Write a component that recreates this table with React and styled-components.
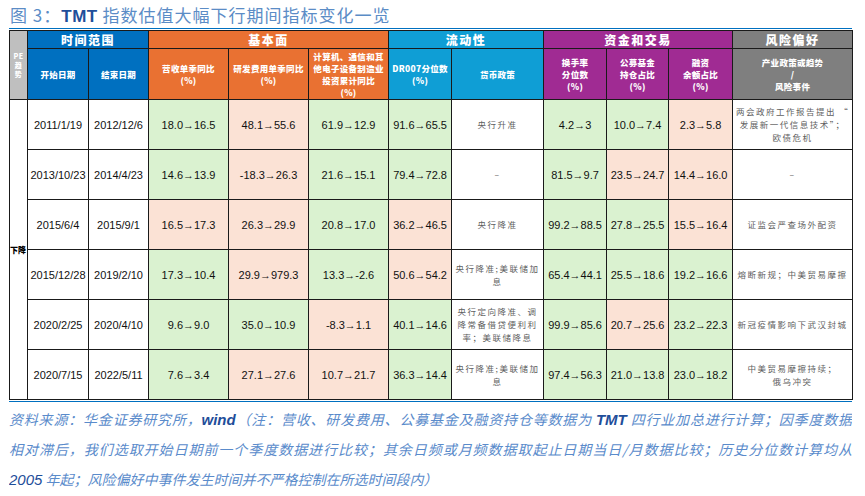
import styled, { createGlobalStyle } from 'styled-components';

const GlobalStyle = createGlobalStyle`
    html, body { margin: 0; padding: 0; background: #FFFFFF; }
    body { font-family: "Liberation Sans", "Noto Sans CJK SC", sans-serif; }
`;

const HEAD = {
    blue: '#0070C0',
    orange: '#E97132',
    cyan: '#0F9ED5',
    purple: '#A02B93',
    gray: '#7F7F7F',
    light: '#BFBFBF',
};

const TONE = { g: '#DAF2D0', p: '#FBE2D5', w: '#FFFFFF' };

const widths = [18, 61, 60, 80, 80, 80, 63, 92, 63, 62, 64, 120];

const rows = [
    {
        start: '2011/1/19', end: '2012/12/6',
        nums: [['18.0→16.5', 'g'], ['48.1→55.6', 'p'], ['61.9→12.9', 'g'], ['91.6→65.5', 'g']],
        policy: ['央行升准'],
        trade: [['4.2→3', 'g'], ['10.0→7.4', 'g'], ['2.3→5.8', 'p']],
        risk: ['两会政府工作报告提出 “', '发展新一代信息技术”；', '欧债危机'],
    },
    {
        start: '2013/10/23', end: '2014/4/23',
        nums: [['14.6→13.9', 'g'], ['-18.3→26.3', 'p'], ['21.6→15.1', 'g'], ['79.4→72.8', 'g']],
        policy: ['–'],
        trade: [['81.5→9.7', 'g'], ['23.5→24.7', 'p'], ['14.4→16.0', 'p']],
        risk: ['–'],
    },
    {
        start: '2015/6/4', end: '2015/9/1',
        nums: [['16.5→17.3', 'p'], ['26.3→29.9', 'p'], ['20.8→17.0', 'g'], ['36.2→46.5', 'p']],
        policy: ['央行降准'],
        trade: [['99.2→88.5', 'g'], ['27.8→25.5', 'g'], ['15.5→16.4', 'p']],
        risk: ['证监会严查场外配资'],
    },
    {
        start: '2015/12/28', end: '2019/2/10',
        nums: [['17.3→10.4', 'g'], ['29.9→979.3', 'p'], ['13.3→-2.6', 'g'], ['50.6→54.2', 'p']],
        policy: ['央行降准;美联储加', '息'],
        trade: [['65.4→44.1', 'g'], ['25.5→18.6', 'g'], ['19.2→16.6', 'g']],
        risk: ['熔断新规；中美贸易摩擦'],
    },
    {
        start: '2020/2/25', end: '2020/4/10',
        nums: [['9.6→9.0', 'g'], ['35.0→10.9', 'g'], ['-8.3→1.1', 'p'], ['40.1→14.6', 'g']],
        policy: ['央行定向降准、调', '降常备借贷便利利', '率；美联储降息'],
        trade: [['99.9→85.6', 'g'], ['20.7→25.6', 'p'], ['23.2→22.3', 'g']],
        risk: ['新冠疫情影响下武汉封城'],
    },
    {
        start: '2020/7/15', end: '2022/5/11',
        nums: [['7.6→3.4', 'g'], ['27.1→27.6', 'p'], ['10.7→21.7', 'p'], ['36.3→14.4', 'g']],
        policy: ['央行降准;美联储加', '息'],
        trade: [['97.4→56.3', 'g'], ['21.0→13.8', 'g'], ['23.0→18.2', 'g']],
        risk: ['中美贸易摩擦持续；', '俄乌冲突'],
    },
];

// one <Line> per forced break, so a cell never re-wraps on its own
function Lines({ list }) {
    return list.map((line, i) => <Line key={i}>{line}</Line>);
}

export default function App() {
    return (
        <Page>
            <GlobalStyle />
            <Title>图 3：<Strong>TMT</Strong> 指数估值大幅下行期间指标变化一览</Title>
            <Rule />
            <Table>
                <colgroup>
                    {widths.map((w, i) => <col key={i} style={{ width: w }} />)}
                </colgroup>
                <thead>
                    <tr>
                        <Th rowSpan={2} bg={HEAD.light} small><Lines list={['PE', '趋', '势']} /></Th>
                        <GroupTh colSpan={2} bg={HEAD.blue}>时间范围</GroupTh>
                        <GroupTh colSpan={3} bg={HEAD.orange}>基本面</GroupTh>
                        <GroupTh colSpan={2} bg={HEAD.cyan}>流动性</GroupTh>
                        <GroupTh colSpan={3} bg={HEAD.purple}>资金和交易</GroupTh>
                        <GroupTh bg={HEAD.gray}>风险偏好</GroupTh>
                    </tr>
                    <tr>
                        <Th bg={HEAD.blue}>开始日期</Th>
                        <Th bg={HEAD.blue}>结束日期</Th>
                        <Th bg={HEAD.orange}><Lines list={['营收单季同比', '(%)']} /></Th>
                        <Th bg={HEAD.orange}><Lines list={['研发费用单季同比', '(%)']} /></Th>
                        <Th bg={HEAD.orange}><Lines list={['计算机、通信和其', '他电子设备制造业', '投资累计同比', '(%)']} /></Th>
                        <Th bg={HEAD.cyan}><Lines list={['DR007分位数', '(%)']} /></Th>
                        <Th bg={HEAD.cyan}>货币政策</Th>
                        <Th bg={HEAD.purple}><Lines list={['换手率', '分位数', '(%)']} /></Th>
                        <Th bg={HEAD.purple}><Lines list={['公募基金', '持仓占比', '(%)']} /></Th>
                        <Th bg={HEAD.purple}><Lines list={['融资', '余额占比', '(%)']} /></Th>
                        <Th bg={HEAD.gray}><Lines list={['产业政策或趋势', '/', '风险事件']} /></Th>
                    </tr>
                </thead>
                <tbody>
                    {rows.map((row, index) => (
                        <tr key={index}>
                            {index === 0 && <TrendCell rowSpan={rows.length}>下降</TrendCell>}
                            <Td tone="w">{row.start}</Td>
                            <Td tone="w">{row.end}</Td>
                            {row.nums.map(([text, tone], i) => <Td key={i} tone={tone}>{text}</Td>)}
                            <TextCell><Lines list={row.policy} /></TextCell>
                            {row.trade.map(([text, tone], i) => <Td key={i} tone={tone}>{text}</Td>)}
                            <TextCell><Lines list={row.risk} /></TextCell>
                        </tr>
                    ))}
                </tbody>
            </Table>
            <Rule />
            <Notes>
                <NoteLine justify>资料来源：华金证券研究所，<Em>wind</Em>（注：营收、研发费用、公募基金及融资持仓等数据为 <Em>TMT</Em> 四行业加总进行计算；因季度数据</NoteLine>
                <NoteLine justify>相对滞后，我们选取开始日期前一个季度数据进行比较；其余日频或月频数据取起止日期当日/月数据比较；历史分位数计算均从</NoteLine>
                <NoteLine><Em light>2005</Em> 年起；风险偏好中事件发生时间并不严格控制在所选时间段内）</NoteLine>
            </Notes>
        </Page>
    );
}

const Page = styled.div`
    width: 843px;
    padding: 4px 0 0 9px;
    display: flex;
    flex-direction: column;
`;

const Title = styled.div`
    font-family: "Noto Sans CJK SC", sans-serif;
    font-size: 17px;
    line-height: 22px;
    letter-spacing: 1px;
    color: #5B8CC6;
    padding-left: 1px;
    height: 23px;
`;

const Strong = styled.span`
    font-family: "Liberation Sans", sans-serif;
    font-weight: bold;
    color: #1F4E9A;
    letter-spacing: 0.5px;
`;

const Rule = styled.div`
    height: 1px;
    background: #0070C0;
    margin: 1px 0 1px 0;
`;

const Table = styled.table`
    width: 843px;
    table-layout: fixed;
    border-collapse: collapse;
    border: 1px solid #595959;
    font-family: "Liberation Sans", "Noto Sans CJK SC", sans-serif;
    tbody tr { height: 50px; }
    thead tr:first-child { height: 18px; }
    thead tr:last-child { height: 51px; }
`;

const Line = styled.div`
    display: block;
`;

const Th = styled.th`
    background: ${props => props.bg};
    color: #FFFFFF;
    font-family: "Noto Sans CJK SC", sans-serif;
    font-weight: 900;
    font-size: ${props => props.small ? '7px' : '8.5px'};
    line-height: ${props => props.small ? '9px' : '12px'};
    border: 1px solid #1A1A1A;
    padding: 0;
    text-align: center;
    vertical-align: middle;
    white-space: nowrap;
    overflow: hidden;
    letter-spacing: 0.3px;
`;

const GroupTh = styled(Th)`
    font-size: 12px;
    line-height: 16px;
    letter-spacing: 1.5px;
`;

const Td = styled.td`
    background: ${props => TONE[props.tone]};
    border: 1px solid #1A1A1A;
    font-size: 11px;
    color: #111111;
    text-align: center;
    vertical-align: middle;
    padding: 0;
    white-space: nowrap;
`;

const TextCell = styled.td`
    background: #FFFFFF;
    border: 1px solid #1A1A1A;
    font-family: "Noto Sans CJK SC", sans-serif;
    font-size: 8.5px;
    line-height: 13px;
    letter-spacing: 1.5px;
    color: #5F5F5F;
    text-align: center;
    vertical-align: middle;
    padding: 0;
    white-space: nowrap;
`;

const TrendCell = styled.td`
    background: #FFFFFF;
    border: 1px solid #1A1A1A;
    font-family: "Noto Sans CJK SC", sans-serif;
    font-weight: 900;
    font-size: 8px;
    color: #000000;
    text-align: left;
    vertical-align: middle;
    padding: 0;
    white-space: nowrap;
`;

const Notes = styled.div`
    display: flex;
    flex-direction: column;
    padding-top: 1px;
`;

const NoteLine = styled.div`
    font-family: "Noto Sans CJK SC", sans-serif;
    font-style: italic;
    font-size: 14px;
    line-height: 30px;
    height: 30px;
    color: #5A8BCB;
    text-align: ${props => props.justify ? 'justify' : 'left'};
    text-align-last: ${props => props.justify ? 'justify' : 'left'};
    white-space: ${props => props.justify ? 'normal' : 'nowrap'};
    overflow: hidden;
`;

const Em = styled.span`
    font-family: "Liberation Sans", sans-serif;
    font-style: italic;
    font-weight: ${props => props.light ? 'normal' : 'bold'};
    font-size: 15px;
    color: #1F4E9A;
`;
